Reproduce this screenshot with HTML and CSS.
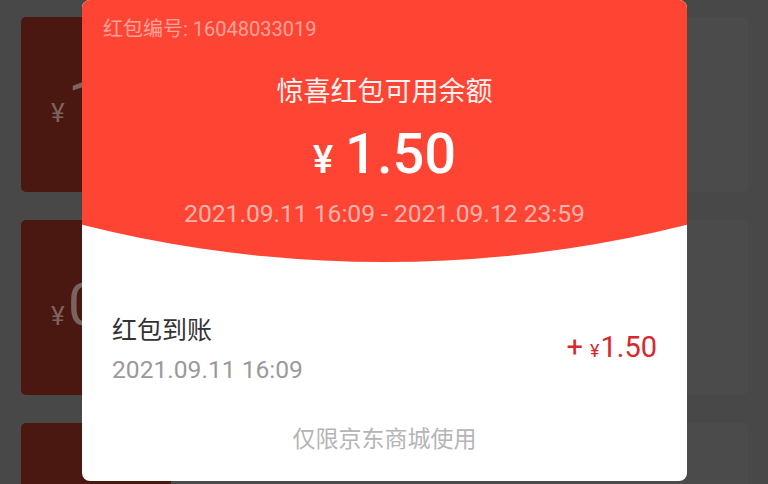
FILE: index.html
```html
<!DOCTYPE html>
<html lang="zh-CN">
<head>
<meta charset="utf-8">
<title>红包详情</title>
<link rel="stylesheet" href="styles.css">
</head>
<body>
<div class="page">
  <div class="bg-card">
    <div class="bg-card-left">
      <span class="bg-yen">¥</span><span class="bg-num">1</span>
    </div>
  </div>
  <div class="bg-card">
    <div class="bg-card-left">
      <span class="bg-yen">¥</span><span class="bg-num">0</span>
    </div>
  </div>
  <div class="bg-card bg-card-last">
    <div class="bg-card-left"></div>
  </div>
</div>

<div class="modal">
  <div class="modal-head">
    <div class="serial">红包编号: 16048033019</div>
    <div class="head-title">惊喜红包可用余额</div>
    <div class="head-amount"><span class="head-yen">¥</span><span class="head-num">1.50</span></div>
    <div class="head-range">2021.09.11 16:09 - 2021.09.12 23:59</div>
  </div>
  <div class="modal-body">
    <div class="record">
      <div class="record-info">
        <div class="record-title">红包到账</div>
        <div class="record-time">2021.09.11 16:09</div>
      </div>
      <div class="record-amount"><span class="rec-plus">+</span><span class="rec-yen">¥</span><span class="rec-num">1.50</span></div>
    </div>
    <div class="note">仅限京东商城使用</div>
  </div>
</div>
</body>
</html>
```

FILE: styles.css
```css
* { box-sizing: border-box; }

html, body {
  margin: 0;
  padding: 0;
}

body {
  width: 768px;
  height: 484px;
  overflow: hidden;
  background: #484848;
  font-family: Roboto, "Noto Sans CJK SC", sans-serif;
  position: relative;
}

.page {
  display: flex;
  flex-direction: column;
  gap: 28px;
  padding: 17px 20px 0 21px;
  height: 484px;
  overflow: hidden;
}

.bg-card {
  height: 175px;
  flex-shrink: 0;
  border-radius: 5px;
  background: #4b4b4b;
  display: flex;
}

.bg-card-last {
  height: 61px;
  border-radius: 5px 5px 0 0;
}

.bg-card-left {
  width: 150px;
  background: #4b1711;
  border-radius: 5px 0 0 5px;
  display: flex;
  align-items: baseline;
  padding: 55px 0 0 30px;
  line-height: 60px;
  color: #7b6360;
}

.bg-card-last .bg-card-left {
  border-radius: 5px 0 0 0;
}

.bg-yen {
  font-size: 26px;
  margin-right: 3px;
}

.bg-num {
  font-size: 60px;
}

.modal {
  position: absolute;
  left: 82px;
  top: 0;
  width: 605px;
  height: 481px;
  border-radius: 8px;
  overflow: hidden;
  background: #ffffff;
  display: flex;
  flex-direction: column;
}

.modal-head {
  height: 263px;
  flex-shrink: 0;
  background: #fe4533;
  clip-path: circle(1250px at 50% -988px);
  display: flex;
  flex-direction: column;
  align-items: center;
  padding-top: 15px;
}

.serial {
  align-self: flex-start;
  padding-left: 21px;
  font-size: 20px;
  line-height: 28px;
  color: rgba(255, 255, 255, 0.52);
}

.head-title {
  margin-top: 31px;
  font-size: 27px;
  line-height: 36px;
  color: rgba(255, 255, 255, 0.96);
}

.head-amount {
  margin-top: 12px;
  display: flex;
  align-items: baseline;
  line-height: 64px;
  height: 64px;
  color: #ffffff;
}

.head-yen {
  font-size: 38px;
  font-weight: 500;
  margin-right: 12px;
}

.head-num {
  font-size: 56px;
  font-weight: 500;
}

.head-range {
  margin-top: 12px;
  font-size: 24.6px;
  line-height: 32px;
  color: rgba(255, 255, 255, 0.6);
}

.modal-body {
  display: flex;
  flex-direction: column;
  flex: 1;
}

.record {
  display: flex;
  justify-content: space-between;
  align-items: flex-start;
  padding: 0 30px;
  margin-top: 52px;
}

.record-title {
  font-size: 25px;
  line-height: 32px;
  color: #333333;
}

.record-time {
  margin-top: 7px;
  font-size: 24.6px;
  line-height: 32px;
  color: #9a9a9a;
}

.record-amount {
  margin-top: 14px;
  display: flex;
  align-items: baseline;
  line-height: 36px;
  color: #d9282d;
  white-space: nowrap;
}

.rec-plus {
  font-size: 29px;
  margin-right: 7px;
}

.rec-yen {
  font-size: 18px;
  margin-right: 1px;
}

.rec-num {
  font-size: 29px;
}

.note {
  margin-top: 39px;
  text-align: center;
  font-size: 23px;
  line-height: 30px;
  color: #b5b5b5;
}
```
